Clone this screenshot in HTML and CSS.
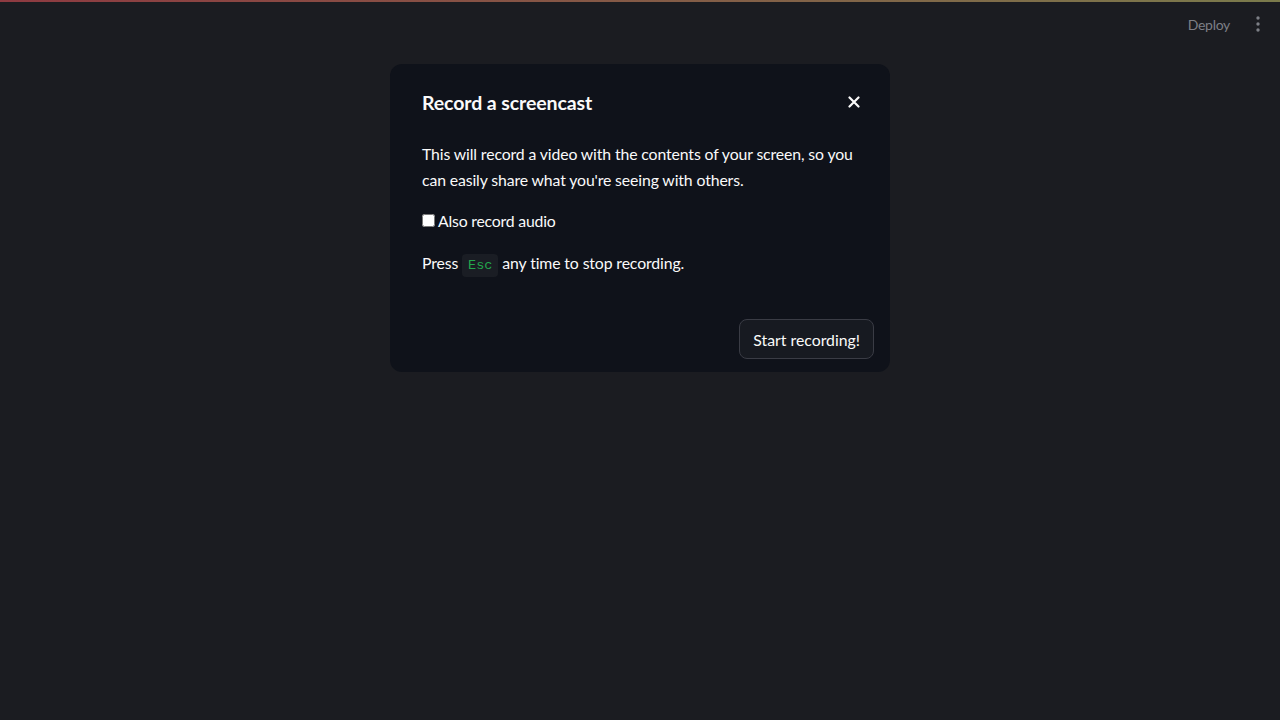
FILE: index.html
```html
<!DOCTYPE html>
<html>
<head>
<meta charset="utf-8">
<link rel="stylesheet" href="styles.css">
</head>
<body>
<div class="decoration"></div>
<header class="toolbar">
  <span class="deploy">Deploy</span>
  <span class="menu">
    <svg width="4" height="16" viewBox="0 0 4 16"><circle cx="2" cy="2" r="1.7" fill="#7d7f86"/><circle cx="2" cy="8" r="1.7" fill="#7d7f86"/><circle cx="2" cy="14" r="1.7" fill="#7d7f86"/></svg>
  </span>
</header>
<main class="stage">
  <div class="modal">
    <div class="modal-head">
      <h2 class="title">Record a screencast</h2>
      <span class="close">
        <svg width="12" height="12" viewBox="0 0 12 12"><path d="M1.5 1.5 L10.5 10.5 M10.5 1.5 L1.5 10.5" stroke="#fafafa" stroke-width="2.2" stroke-linecap="round"/></svg>
      </span>
    </div>
    <div class="modal-body">
      <p class="desc">This will record a video with the contents of your screen, so you can easily share what you're seeing with others.</p>
      <label class="check"><input type="checkbox"> Also record audio</label>
      <p class="press">Press <code class="kbd">Esc</code> any time to stop recording.</p>
    </div>
    <div class="modal-foot">
      <button class="btn">Start recording!</button>
    </div>
  </div>
</main>
</body>
</html>
```
FILE: styles.css
```css
html, body {
  margin: 0;
  padding: 0;
  height: 100%;
}
body {
  background: #1b1c21;
  font-family: "Lato", "Noto Sans", sans-serif;
  color: #fafafa;
}
.decoration {
  height: 2px;
  background: linear-gradient(90deg, #8e3a41, #7b7b4c);
}
.toolbar {
  height: 44px;
  display: flex;
  align-items: center;
  justify-content: flex-end;
  padding-right: 20px;
  gap: 26px;
}
.deploy {
  font-size: 14px;
  letter-spacing: -0.3px;
  color: #7d7f86;
}
.menu {
  display: flex;
  align-items: center;
}
.stage {
  display: flex;
  justify-content: center;
  padding-top: 18px;
}
.modal {
  width: 500px;
  background: #0f121a;
  border-radius: 12px;
  box-sizing: border-box;
  padding: 23px 16px 13px 32px;
}
.modal-head {
  display: flex;
  align-items: center;
  justify-content: space-between;
  padding-right: 14px;
  height: 30px;
}
.title {
  margin: 0;
  font-size: 19.5px;
  font-weight: 700;
  letter-spacing: -0.1px;
}
.close {
  display: flex;
  margin-top: 0;
}
.modal-body {
  padding-top: 24px;
  padding-right: 16px;
  font-size: 15.8px;
  letter-spacing: -0.12px;
}
.desc {
  margin: 0;
  line-height: 26px;
}
.check {
  display: flex;
  align-items: center;
  gap: 3px;
  margin-top: 15px;
  height: 24px;
  letter-spacing: -0.2px;
}
.check input {
  margin: 0;
  width: 13px;
  height: 13px;
}
.press {
  margin: 19px 0 0;
  line-height: 24px;
}
.kbd {
  font-family: "Liberation Mono", monospace;
  font-size: 13.5px;
  letter-spacing: 0;
  color: #23a64c;
  background: #1a1d24;
  border-radius: 4px;
  padding: 4px 6px;
}
.modal-foot {
  display: flex;
  justify-content: flex-end;
  padding-top: 41px;
}
.btn {
  font-family: inherit;
  font-size: 15.8px;
  color: #fafafa;
  background: #171a21;
  border: 1px solid #3a3c45;
  border-radius: 8px;
  height: 40px;
  padding: 0 13px;
}
```
